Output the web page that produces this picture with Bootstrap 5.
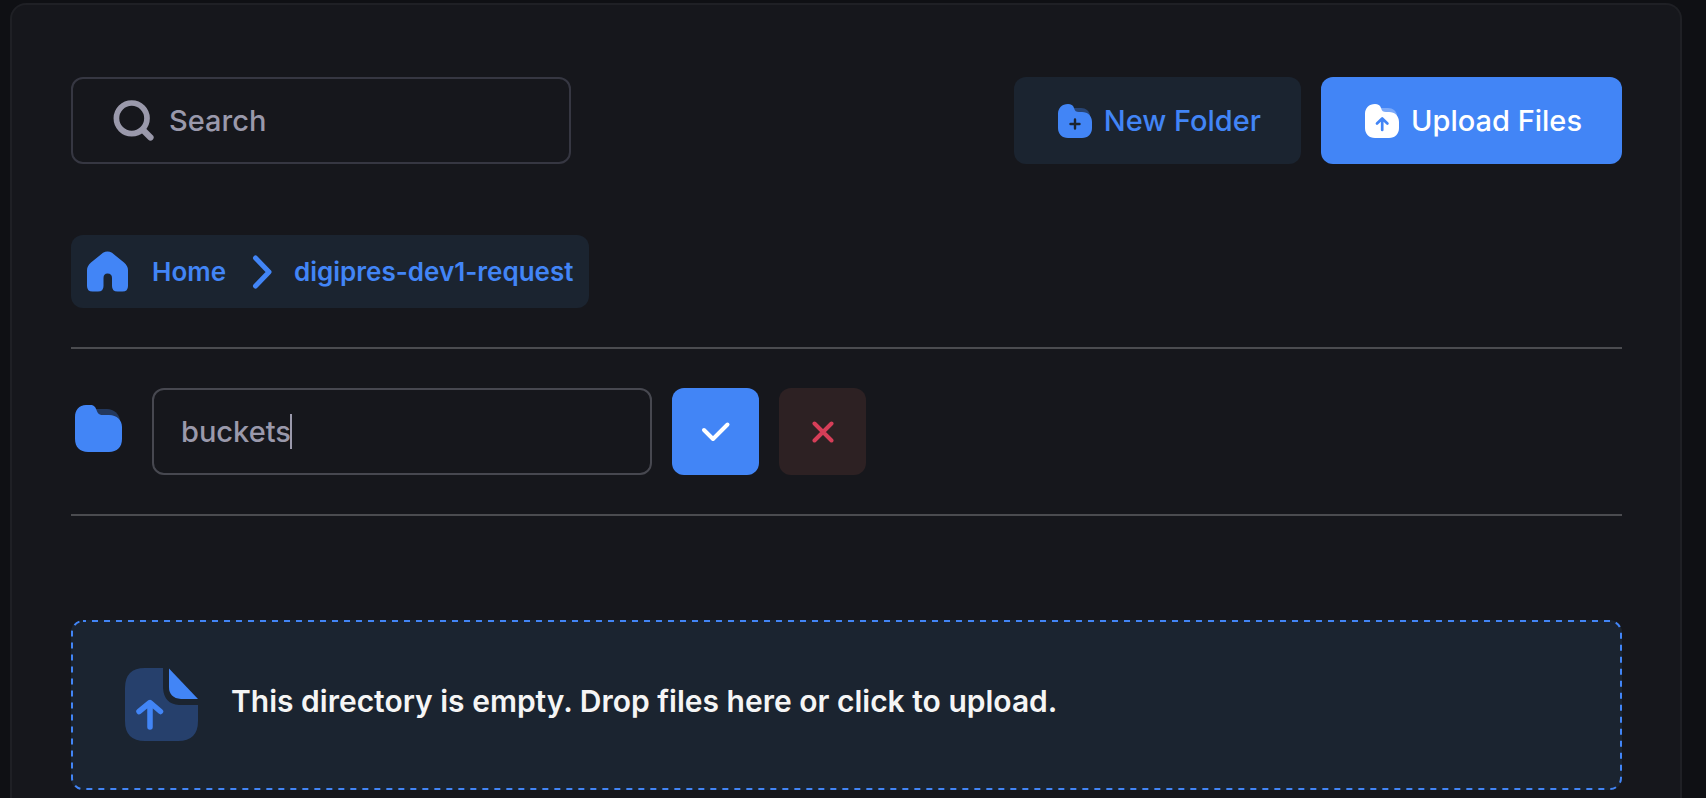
<!DOCTYPE html>
<html lang="en" data-bs-theme="dark">
<head>
<meta charset="utf-8">
<meta name="viewport" content="width=device-width, initial-scale=1">
<title>File Manager</title>
<link href="https://cdn.jsdelivr.net/npm/bootstrap@5.3.0/dist/css/bootstrap.min.css" rel="stylesheet">
<style>
  :root { --accent: #4285f6; --tint: #1b2430; --panel: #16171c; --muted: #9a99ab; }
  body { background: #0f1014; font-family: Inter, "Liberation Sans", sans-serif; font-size: 29px; font-weight: 500; line-height: 43px; }
  svg { display: block; flex: none; }
  .panel { background: var(--panel); border: 2px solid #1f2025; border-bottom: 0; border-radius: 16px 16px 0 0; margin: 3px 24px 0 10px; padding: 72px 58px 8px 59px; min-height: calc(100vh - 3px); }
  .field { width: 500px; height: 87px; padding: 0 27px; border: 2px solid #363742; border-radius: 12px; background: transparent; color: var(--muted); }
  .field input { flex: 1; min-width: 0; padding: 0; border: 0; outline: 0; background: transparent; color: inherit; font-weight: 500; }
  .field input::placeholder { color: var(--muted); opacity: 1; }
  .field-search { padding-left: 40px; gap: 14px; }
  .field-name { border-color: #474850; }
  .caret { left: 136px; top: 24px; width: 2px; height: 35px; background: var(--muted); }
  .btn-tool { display: flex; align-items: center; justify-content: center; gap: 12px; height: 87px; padding: 0 40px 0 44px; border: 0; border-radius: 12px; font-size: 29px; font-weight: 500; line-height: 43px; }
  .btn-soft { background: var(--tint); color: var(--accent); }
  .btn-soft:hover { background: #22303f; color: var(--accent); }
  .btn-solid { background: var(--accent); color: #fff; }
  .btn-solid:hover { background: #3376ea; color: #fff; }
  .btn-deny { background: #2d2123; color: #d63e58; }
  .btn-deny:hover { background: #3a272b; color: #d63e58; }
  .btn-square { width: 87px; padding: 0; }
  .row-gap { gap: 20px; }
  .crumbs { width: fit-content; height: 73px; margin-top: 71px; padding: 0 16px; border-radius: 12px; background: var(--tint); font-size: 26px; font-weight: 600; color: var(--accent); }
  .crumbs a { color: var(--accent); text-decoration: none; }
  .crumb-sep { margin: 0 20px 0 24px; }
  .rule { height: 2px; margin: 39px 0; border: 0; background: #4b4c50; opacity: 1; }
  .folder-slot { width: 61px; padding-left: 4px; margin-top: -6px; }
  .dropzone { display: flex; align-items: center; gap: 33px; width: 100%; height: 170px; margin-top: 104px; padding: 0 54px 2px; border: 0; border-radius: 12px; background: var(--tint); color: #f5f5f5; font-size: 30px; font-weight: 600; text-align: left; }
  .dropzone-text { padding-bottom: 6px; }
  .dash-frame { inset: 0; width: 100%; height: 100%; }
  .dash-frame rect { width: calc(100% - 2px); height: calc(100% - 2px); fill: none; stroke: var(--accent); stroke-width: 2px; stroke-dasharray: 6 6; stroke-dashoffset: 3px; }
</style>
</head>
<body>
<main class="panel">
  <div class="d-flex justify-content-between align-items-center flex-wrap row-gap">
    <label class="field field-search d-flex align-items-center">
      <svg width="42" height="42" viewBox="0 0 42 42" fill="none" stroke="currentColor" aria-hidden="true"><circle cx="18.700" cy="18.300" r="15.300" stroke-width="5.700"/><path d="M30 30L37.500 37.500" stroke-width="6.200" stroke-linecap="round"/></svg>
      <input type="search" placeholder="Search" aria-label="Search">
    </label>
    <div class="d-flex row-gap">
      <button type="button" class="btn btn-tool btn-soft">
        <svg width="34" height="34" viewBox="0 0 34 34" aria-hidden="true"><path d="M14 4H23C28 4 31 7 32 11V16H14Z" fill="#4285f6" opacity=".35"/><path d="M10 0C13 0 15 1 16 4C17 7 18 8 21 8H24C30 8 34 12 34 18V24C34 30 30 34 24 34H10C4 34 0 30 0 24V10C0 4 4 0 10 0Z" fill="#4285f6"/><path d="M17 15.500V24.500M12.500 20H21.500" stroke="#1b2430" stroke-width="2.400" stroke-linecap="round"/></svg>
        New Folder
      </button>
      <button type="button" class="btn btn-tool btn-solid">
        <svg width="34" height="34" viewBox="0 0 34 34" aria-hidden="true"><path d="M14 4H23C28 4 31 7 32 11V16H14Z" fill="#fff" opacity=".3"/><path d="M10 0C13 0 15 1 16 4C17 7 18 8 21 8H24C30 8 34 12 34 18V24C34 30 30 34 24 34H10C4 34 0 30 0 24V10C0 4 4 0 10 0Z" fill="#fff"/><path d="M17.200 26V15M12 19.500L17.200 14.500L22.400 19.500" fill="none" stroke="#4285f6" stroke-width="2.700" stroke-linecap="round" stroke-linejoin="round"/></svg>
        Upload Files
      </button>
    </div>
  </div>

  <nav class="crumbs d-flex align-items-center" aria-label="Folder path">
    <svg class="me-4" width="41" height="41" viewBox="0 0 41 41" fill="#4285f6" aria-hidden="true"><path d="M16 1.800Q20.500 -1 25 1.800L37 11.500Q41 15 41 19V35Q41 40.500 35.500 40.500H30.500Q25 40.500 25 35V27Q25 22.500 20.500 22.500Q16.500 22.500 16.500 27V35Q16.500 40.500 11 40.500H5.500Q0 40.500 0 35V19Q0 15 4 11.500Z"/></svg>
    <a href="#">Home</a>
    <svg class="crumb-sep" width="24" height="34" viewBox="0 0 24 34" fill="none" stroke="#4285f6" stroke-width="5" stroke-linecap="round" stroke-linejoin="round" aria-hidden="true"><path d="M5.500 3L19 17L5.500 31"/></svg>
    <a href="#">digipres-dev1-request</a>
  </nav>

  <hr class="rule">

  <form class="d-flex align-items-center row-gap">
    <div class="folder-slot">
      <svg width="47" height="47" viewBox="0 0 47 47" aria-hidden="true"><path d="M20 4H32C39 4 44 9 45 15V20H20Z" fill="#4285f6" opacity=".3"/><path d="M11 0H15C19 0 20.500 2 21.500 5C22.500 8 24 10 28 10H34C42 10 47 15 47 22V34C47 42 42 47 34 47H13C5 47 0 42 0 34V12C0 5 4 0 11 0Z" fill="#4285f6"/></svg>
    </div>
    <div class="field field-name d-flex align-items-center position-relative">
      <input type="text" value="buckets" aria-label="Folder name">
      <span class="caret position-absolute"></span>
    </div>
    <button type="button" class="btn btn-tool btn-solid btn-square" aria-label="Create folder">
      <svg width="30" height="22" viewBox="0 0 30 22" fill="none" stroke="currentColor" stroke-width="4" stroke-linecap="round" stroke-linejoin="round" aria-hidden="true"><path d="M3 9L12 18L26.500 3.500"/></svg>
    </button>
    <button type="button" class="btn btn-tool btn-deny btn-square" aria-label="Cancel">
      <svg width="22" height="22" viewBox="0 0 22 22" fill="none" stroke="currentColor" stroke-width="4" stroke-linecap="round" aria-hidden="true"><path d="M2.500 2.500L19.500 19.500M19.500 2.500L2.500 19.500"/></svg>
    </button>
  </form>

  <hr class="rule">

  <button type="button" class="dropzone position-relative">
    <svg class="dash-frame position-absolute" aria-hidden="true"><rect x="1" y="1" rx="11"/></svg>
    <svg width="73" height="73" viewBox="0 0 73 73" aria-hidden="true"><path d="M20 0H38V20Q39 36 54 37H73V53Q73 73 53 73H20Q0 73 0 53V20Q0 0 20 0Z" fill="#26406c"/><path d="M44 .5L73 31H56Q44 30 44 19Z" fill="#4285f6"/><path d="M25 59V35M14 43.500L25 34.500L35.500 43.500" fill="none" stroke="#4285f6" stroke-width="5.500" stroke-linecap="round" stroke-linejoin="round"/></svg>
    <span class="dropzone-text">This directory is empty. Drop files here or click to upload.</span>
  </button>
</main>
<script src="https://cdn.jsdelivr.net/npm/bootstrap@5.3.0/dist/js/bootstrap.bundle.min.js"></script>
</body>
</html>
